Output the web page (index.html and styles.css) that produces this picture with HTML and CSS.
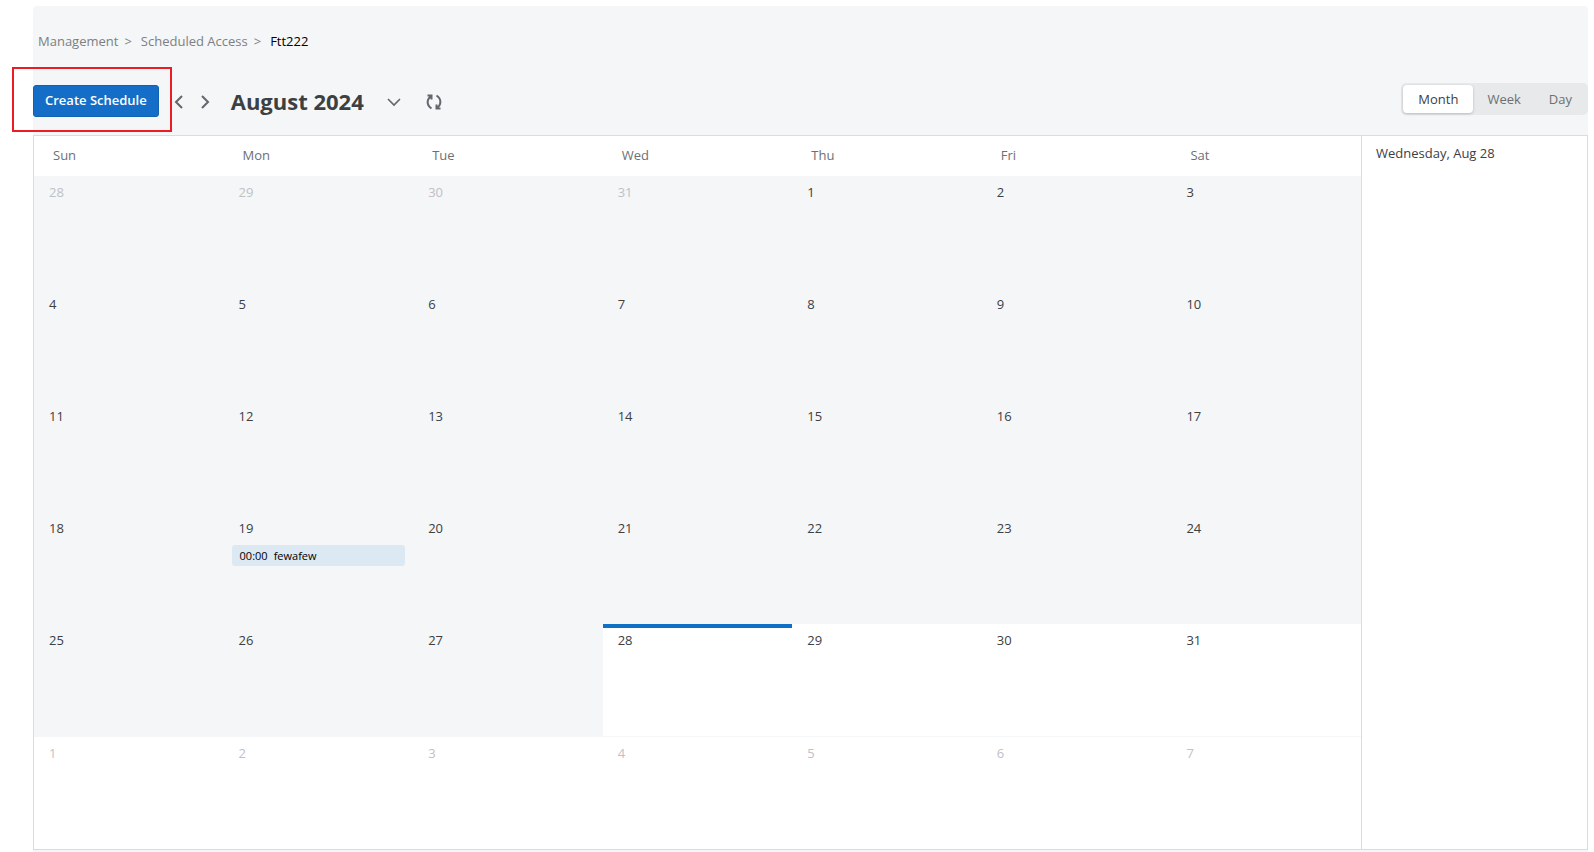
FILE: index.html
```html
<!DOCTYPE html>
<html lang="en">

<head>
    <meta charset="UTF-8">
    <meta name="viewport" content="width=device-width, initial-scale=1.0">
    <title>Scheduled Access</title>
    <link rel="stylesheet" href="styles.css">
</head>

<body>
    <main class="page">
        <nav class="breadcrumb" aria-label="Breadcrumb">
            <a href="#">Management</a>
            <span class="separator">&gt;</span>
            <a href="#">Scheduled Access</a>
            <span class="separator">&gt;</span>
            <span class="current">Ftt222</span>
        </nav>

        <div class="toolbar">
            <div class="create-wrap">
                <button type="button" class="create-btn">Create Schedule</button>
            </div>
            <button type="button" class="icon-btn prev" aria-label="Previous month">
                <svg width="16" height="16" viewBox="0 0 16 16"><path d="M11 2 L5 8 L11 14" /></svg>
            </button>
            <button type="button" class="icon-btn next" aria-label="Next month">
                <svg width="16" height="16" viewBox="0 0 16 16"><path d="M5 2 L11 8 L5 14" /></svg>
            </button>
            <h1>August 2024</h1>
            <button type="button" class="icon-btn pick" aria-label="Choose month">
                <svg width="16" height="16" viewBox="0 0 16 16"><path d="M2 5 L8 11 L14 5" /></svg>
            </button>
            <button type="button" class="icon-btn refresh" aria-label="Refresh">
                <svg width="16" height="16" viewBox="0 0 16 16">
                    <path d="M1.5 1.5 H5.5 V5.5 M5.5 1.8 C0.5 5 0.2 11 5.5 14.5" />
                    <path d="M14.5 14.5 H10.5 V10.5 M10.5 14.2 C15.5 11 15.8 5 10.5 1.5" />
                </svg>
            </button>
            <div class="views">
                <button type="button" class="active">Month</button>
                <button type="button">Week</button>
                <button type="button">Day</button>
            </div>
        </div>

        <div class="calendar">
            <div class="month-wrap">
                <table class="month">
                    <thead>
                        <tr>
                            <th>Sun</th>
                            <th>Mon</th>
                            <th>Tue</th>
                            <th>Wed</th>
                            <th>Thu</th>
                            <th>Fri</th>
                            <th>Sat</th>
                        </tr>
                    </thead>
                    <tbody>
                        <tr>
                            <td class="past other">28</td>
                            <td class="past other">29</td>
                            <td class="past other">30</td>
                            <td class="past other">31</td>
                            <td class="past">1</td>
                            <td class="past">2</td>
                            <td class="past">3</td>
                        </tr>
                        <tr>
                            <td class="past">4</td>
                            <td class="past">5</td>
                            <td class="past">6</td>
                            <td class="past">7</td>
                            <td class="past">8</td>
                            <td class="past">9</td>
                            <td class="past">10</td>
                        </tr>
                        <tr>
                            <td class="past">11</td>
                            <td class="past">12</td>
                            <td class="past">13</td>
                            <td class="past">14</td>
                            <td class="past">15</td>
                            <td class="past">16</td>
                            <td class="past">17</td>
                        </tr>
                        <tr>
                            <td class="past">18</td>
                            <td class="past">19
                                <a href="#" class="event"><span>00:00</span><span>fewafew</span></a>
                            </td>
                            <td class="past">20</td>
                            <td class="past">21</td>
                            <td class="past">22</td>
                            <td class="past">23</td>
                            <td class="past">24</td>
                        </tr>
                        <tr>
                            <td class="past">25</td>
                            <td class="past">26</td>
                            <td class="past">27</td>
                            <td class="today">28</td>
                            <td>29</td>
                            <td>30</td>
                            <td>31</td>
                        </tr>
                        <tr class="last">
                            <td class="other">1</td>
                            <td class="other">2</td>
                            <td class="other">3</td>
                            <td class="other">4</td>
                            <td class="other">5</td>
                            <td class="other">6</td>
                            <td class="other">7</td>
                        </tr>
                    </tbody>
                </table>
            </div>
            <aside class="agenda">Wednesday, Aug 28</aside>
        </div>
    </main>
</body>

</html>
```
FILE: styles.css
```css
* {
    box-sizing: border-box;
}

body {
    margin: 0;
    padding: 6px 6px 0 33px;
    background-color: #ffffff;
    font-family: "Open Sans", sans-serif;
    font-size: 13px;
    line-height: 18px;
    color: #3c4043;
}

button {
    border: 0;
    padding: 0;
    background: none;
    font: inherit;
    color: inherit;
    cursor: pointer;
}

.page {
    min-height: calc(100vh - 6px);
    padding-top: 26px;
    background-color: #f4f6f8;
    border-radius: 4px 4px 0 0;
}

.breadcrumb {
    display: flex;
    padding-left: 5px;
    color: #7d7f82;
}

.breadcrumb a {
    color: inherit;
    text-decoration: none;
}

.separator {
    margin: 0 9px 0 6px;
}

.current {
    color: #000000;
}

.toolbar {
    display: flex;
    align-items: center;
    height: 66px;
    margin: 16px 0 3px;
}

/* red frame hangs over the left edge of the panel */
.create-wrap {
    margin-left: -21px;
    padding: 16px 11px 13px 19px;
    border: 2px solid #ed1c24;
}

.create-btn {
    display: block;
    height: 32px;
    padding: 0 11px 2px;
    border: 1px solid #1260b0;
    border-radius: 3px;
    background-color: #146ec8;
    color: #ffffff;
    font-weight: 600;
}

.icon-btn {
    display: flex;
    margin-top: 5px;
}

.icon-btn svg {
    fill: none;
    stroke: #63666a;
    stroke-width: 2;
}

.prev {
    margin-left: -1px;
}

.next {
    margin-left: 10px;
}

.pick {
    margin-left: 22px;
}

.pick svg {
    stroke-width: 1.6;
}

.refresh {
    margin-left: 24px;
}

h1 {
    margin: 4px 0 0 18px;
    font-size: 22px;
    line-height: 30px;
    font-weight: 700;
}

.views {
    display: flex;
    height: 32px;
    margin-left: auto;
    padding: 2px;
    border-radius: 5px;
    background-color: #e7e9ea;
    color: #6c7074;
    font-weight: 500;
}

.views button {
    padding: 0 14px;
    border-radius: 4px;
}

.views .active {
    padding: 0 15px;
    background-color: #ffffff;
    color: #3c4043;
    box-shadow: 0 1px 3px rgba(0, 0, 0, 0.2);
}

.calendar {
    display: flex;
    background-color: #ffffff;
    border: 1px solid #dadce0;
}

.month-wrap {
    flex: 1;
}

.month {
    width: 100%;
    table-layout: fixed;
    border-collapse: collapse;
}

.month th {
    height: 40px;
    padding: 0 0 2px 19px;
    color: #6c7074;
    font-weight: 400;
    text-align: left;
}

.month td {
    height: 112px;
    padding: 7px 8px 0 15px;
    vertical-align: top;
}

.month .past {
    background-color: #f4f6f8;
}

.month .other {
    color: #bfc1c4;
}

.month .today {
    box-shadow: inset 0 4px 0 #0f71c6;
}

.month .last td {
    height: 113px;
    border-top: 1px solid #f4f6f8;
}

.event {
    display: flex;
    gap: 6px;
    margin: 8px 0 0 -7px;
    padding: 2px 8px 1px;
    border-radius: 3px;
    background-color: #dce8f2;
    color: #000000;
    font-size: 11px;
    text-decoration: none;
}

.agenda {
    width: 226px;
    padding: 8px 14px;
    border-left: 1px solid #dadce0;
}

@media only screen and (max-width: 900px) {
    .agenda {
        display: none;
    }
}
```
